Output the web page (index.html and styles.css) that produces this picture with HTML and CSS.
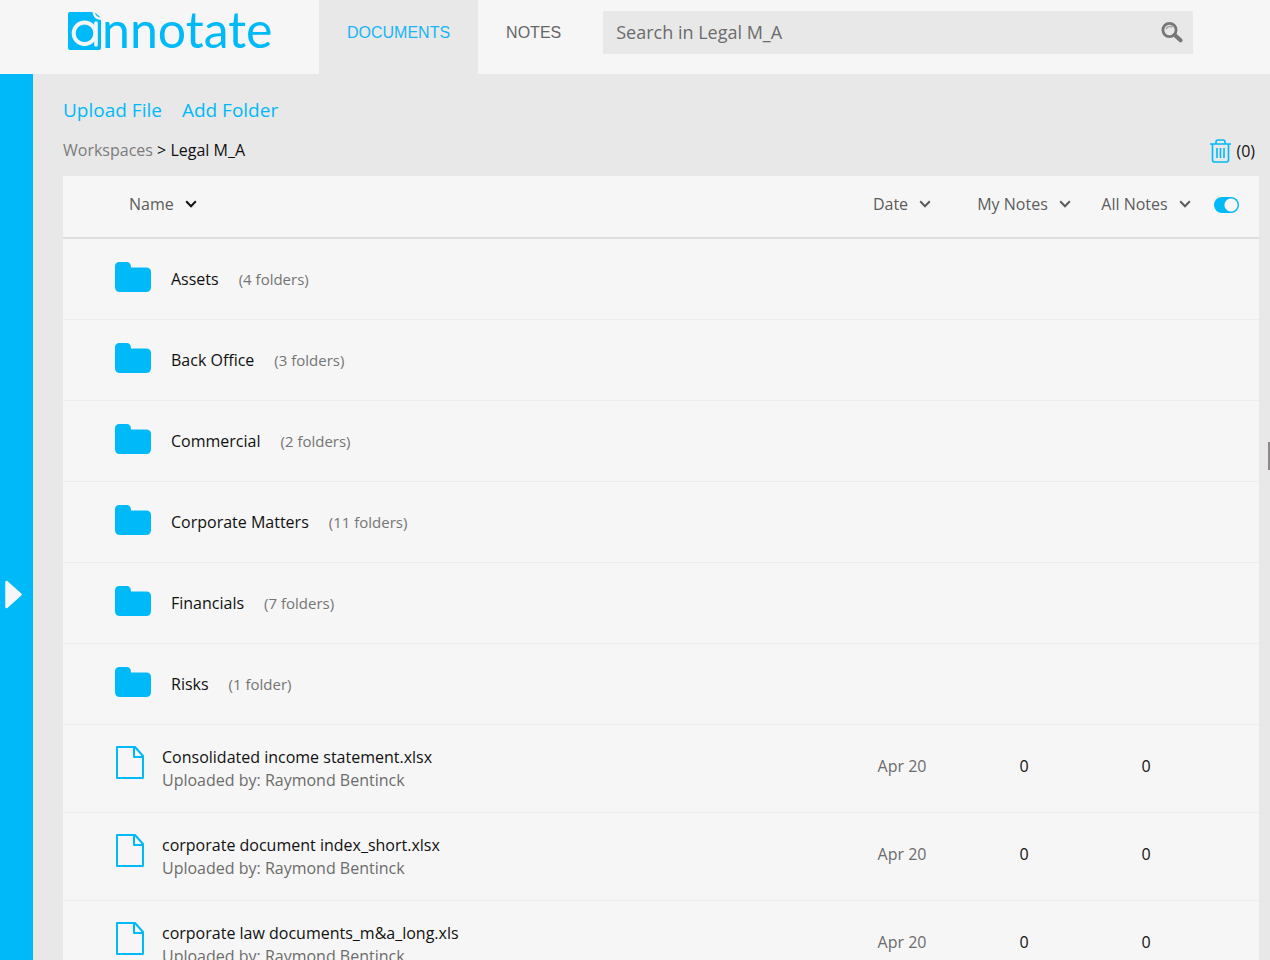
FILE: index.html
```html
<!DOCTYPE html>
<html lang="en">
<head>
<meta charset="utf-8">
<meta name="viewport" content="width=device-width, initial-scale=1">
<title>Annotate – Legal M_A</title>
<link rel="stylesheet" href="styles.css">
</head>
<body>
<svg class="sprite" aria-hidden="true">
  <symbol id="folder" viewBox="0 0 36 30"><path d="M4.500 0H11.500Q16 0 16 5.500H31Q36 5.500 36 10V25Q36 30 31 30H5Q0 30 0 25V4.500Q0 0 4.500 0Z" fill="currentColor"/></symbol>
  <symbol id="file" viewBox="0 0 28 33"><path d="M1 1H19L27 10V32H1ZM18 1V11H27" fill="none" stroke="currentColor" stroke-width="2" stroke-linejoin="round"/></symbol>
  <symbol id="chevron" viewBox="0 0 12 8"><path d="M1.200 1.300L6 6.200L10.800 1.300" fill="none" stroke="currentColor" stroke-width="2"/></symbol>
</svg>
<div class="app">
  <header class="topbar">
    <a class="logo" href="#" aria-label="annotate">
      <svg class="logo-mark" viewBox="0 0 34 38" aria-hidden="true">
        <path d="M2 0H24.500Q25 7 33 8V36Q33 38 31 38H2Q0 38 0 36V2Q0 0 2 0Z" fill="#00b9f8"/>
        <path d="M27 .5L32.500 5.500Q28 5 27 .5Z" fill="#00b9f8"/>
        <circle cx="16.500" cy="21.200" r="10.800" fill="none" stroke="#f6f6f6" stroke-width="4"/>
        <path d="M28 11V33" stroke="#f6f6f6" stroke-width="3.600" stroke-linecap="round"/>
      </svg>
      <span class="logo-text">nnotate</span>
    </a>
    <nav class="tabs">
      <a class="tab tab-active" href="#">DOCUMENTS</a>
      <a class="tab" href="#">NOTES</a>
    </nav>
    <form class="search">
      <input class="search-input" type="search" placeholder="Search in Legal M_A" aria-label="Search in Legal M_A">
      <button class="search-button" type="button" aria-label="Search">
        <svg viewBox="0 0 22 21" width="22" height="21" aria-hidden="true"><circle cx="8.500" cy="8" r="6.600" fill="none" stroke="currentColor" stroke-width="2.800"/><path d="M5 7Q7 3.500 11.500 5" fill="none" stroke="currentColor" stroke-width="1.600" opacity=".6"/><path d="M13.500 12.800L19.500 18.300" stroke="currentColor" stroke-width="4" stroke-linecap="round"/></svg>
      </button>
    </form>
  </header>
  <div class="body">
    <aside class="rail">
      <button class="rail-toggle" type="button" aria-label="Open panel">
        <svg viewBox="0 0 17 29" width="17" height="29" aria-hidden="true"><path d="M1.500 2L15.500 14.500L1.500 27Z" fill="currentColor" stroke="currentColor" stroke-width="2.500" stroke-linejoin="round"/></svg>
      </button>
    </aside>
    <main class="content">
      <div class="actions">
        <button class="action" type="button">Upload File</button>
        <button class="action" type="button">Add Folder</button>
      </div>
      <div class="path-row">
        <nav class="path" aria-label="Breadcrumb"><a class="path-link" href="#">Workspaces</a> &gt; <span>Legal M_A</span></nav>
        <button class="trash" type="button" aria-label="Trash (0)">
          <svg class="trash-icon" viewBox="0 0 22 24" width="22" height="24" aria-hidden="true"><path d="M0 5H21M6 5V3Q6 1 8 1H13Q15 1 15 3V5M2.500 5V21Q2.500 23 4.500 23H16.500Q18.500 23 18.500 21V5M7 9V19M10.500 9V19M14 9V19" fill="none" stroke="currentColor" stroke-width="1.600"/></svg>
          <span>(0)</span>
        </button>
      </div>
      <table class="files">
        <thead>
          <tr>
            <th class="name-head"><button class="sort sort-active" type="button">Name <svg class="chevron"><use href="#chevron"/></svg></button></th>
            <th class="col-value"><button class="sort" type="button">Date <svg class="chevron"><use href="#chevron"/></svg></button></th>
            <th class="col-value"><button class="sort" type="button">My Notes <svg class="chevron"><use href="#chevron"/></svg></button></th>
            <th class="col-value"><button class="sort" type="button">All Notes <svg class="chevron"><use href="#chevron"/></svg></button></th>
            <th class="col-switch"><input class="switch" type="checkbox" checked aria-label="Show notes columns"></th>
          </tr>
        </thead>
        <tbody>
          <tr class="folder-row"><td colspan="5"><div class="folder"><svg class="folder-icon"><use href="#folder"/></svg><span class="folder-name">Assets</span><span class="folder-count">(4 folders)</span></div></td></tr>
          <tr class="folder-row"><td colspan="5"><div class="folder"><svg class="folder-icon"><use href="#folder"/></svg><span class="folder-name">Back Office</span><span class="folder-count">(3 folders)</span></div></td></tr>
          <tr class="folder-row"><td colspan="5"><div class="folder"><svg class="folder-icon"><use href="#folder"/></svg><span class="folder-name">Commercial</span><span class="folder-count">(2 folders)</span></div></td></tr>
          <tr class="folder-row"><td colspan="5"><div class="folder"><svg class="folder-icon"><use href="#folder"/></svg><span class="folder-name">Corporate Matters</span><span class="folder-count">(11 folders)</span></div></td></tr>
          <tr class="folder-row"><td colspan="5"><div class="folder"><svg class="folder-icon"><use href="#folder"/></svg><span class="folder-name">Financials</span><span class="folder-count">(7 folders)</span></div></td></tr>
          <tr class="folder-row"><td colspan="5"><div class="folder"><svg class="folder-icon"><use href="#folder"/></svg><span class="folder-name">Risks</span><span class="folder-count">(1 folder)</span></div></td></tr>
          <tr class="file-row"><td><div class="file"><svg class="file-icon"><use href="#file"/></svg><div><div class="file-name">Consolidated income statement.xlsx</div><div class="file-owner">Uploaded by: Raymond Bentinck</div></div></div></td><td class="value date">Apr 20</td><td class="value">0</td><td class="value">0</td><td></td></tr>
          <tr class="file-row"><td><div class="file"><svg class="file-icon"><use href="#file"/></svg><div><div class="file-name">corporate document index_short.xlsx</div><div class="file-owner">Uploaded by: Raymond Bentinck</div></div></div></td><td class="value date">Apr 20</td><td class="value">0</td><td class="value">0</td><td></td></tr>
          <tr class="file-row"><td><div class="file"><svg class="file-icon"><use href="#file"/></svg><div><div class="file-name">corporate law documents_m&amp;a_long.xls</div><div class="file-owner">Uploaded by: Raymond Bentinck</div></div></div></td><td class="value date">Apr 20</td><td class="value">0</td><td class="value">0</td><td></td></tr>
        </tbody>
      </table>
    </main>
  </div>
  <div class="edge-handle"></div>
</div>
</body>
</html>
```
FILE: styles.css
```css
* { box-sizing: border-box; }
body { margin: 0; font: 16px/24px "Open Sans", sans-serif; color: #111; background: #e8e8e8; }
button { font: inherit; color: inherit; background: none; border: 0; padding: 0; cursor: pointer; }
a { text-decoration: none; color: inherit; }
svg { display: block; flex: none; }
.sprite { position: absolute; width: 0; height: 0; }

.app { position: relative; height: 100vh; display: flex; flex-direction: column; overflow: hidden; }
.topbar { display: flex; flex: none; height: 74px; background: #f6f6f6; }
.logo { display: flex; width: 319px; padding: 12px 0 0 68px; color: #00b9f8; }
.logo-mark { width: 34px; height: 38px; }
.logo-text { font-family: Lato, sans-serif; font-size: 50px; line-height: 34px; }
.tabs { display: flex; font: 16px/20px "Liberation Sans", Arial, sans-serif; color: #666; }
.tab { padding: 23px 28px 0; }
.tab-active { background: #e8e8e8; color: #19b5f5; }
.search { display: flex; flex: 1; height: 43px; margin: 11px 77px 0 14px; background: #e8e8e8; }
.search-input { flex: 1; min-width: 0; border: 0; background: none; padding: 0 13px 2px; font: 18px/24px "Open Sans", sans-serif; color: #666; }
.search-input::placeholder { color: #6c6c6c; opacity: 1; }
.search-button { padding: 0 10px; color: #777; }

.body { display: flex; flex: 1; min-height: 0; }
.rail { flex: none; width: 33px; padding: 506px 0 0 5px; background: #00b9f8; }
.rail-toggle { display: block; color: #f6f6f6; }
.content { flex: 1; min-width: 0; padding: 22px 11px 0 30px; overflow: auto; scrollbar-width: none; }
.actions { display: flex; gap: 20px; font-size: 19px; line-height: 28px; color: #00b9f8; }
.path-row { display: flex; justify-content: space-between; align-items: center; padding: 13px 4px 12px 0; }
.path { font-size: 16px; line-height: 27px; color: #111; }
.path-link { color: #7c7c7c; }
.trash { display: flex; align-items: center; gap: 4px; line-height: 24px; }
.trash-icon { color: #00b9f8; }

.files { width: 100%; table-layout: fixed; border-spacing: 0; background: #f6f6f6; }
th, td { padding: 0; font-weight: 400; text-align: center; border-bottom: 1px solid #ececec; }
th { height: 63px; border-bottom: 2px solid #dedede; padding-bottom: 6px; }
.name-head { text-align: left; padding-left: 66px; }
.col-value { width: 122px; }
.col-switch { width: 52px; text-align: left; padding-left: 7px; }
.sort { display: inline-flex; align-items: center; gap: 11px; color: #5c5c5c; }
.chevron { width: 12px; height: 8px; }
.sort-active .chevron { color: #111; }
.switch { appearance: none; display: block; width: 25px; height: 16px; margin: 2px 0 0; border-radius: 8px; background: radial-gradient(circle at 17px 8px, #f6f6f6 6px, #00b9f8 7px); }
.folder-row td { height: 81px; }
.folder { display: flex; align-items: center; padding-left: 52px; }
.folder-icon { width: 36px; height: 30px; margin-bottom: 4px; color: #00b9f8; }
.folder-name { margin: 0 20px; }
.folder-count { font-size: 15px; color: #757575; }
.file-row td { height: 88px; }
.file { display: flex; align-items: center; gap: 18px; padding-left: 53px; text-align: left; line-height: 23px; }
.file-icon { width: 28px; height: 33px; margin-bottom: 12px; color: #00b9f8; }
.file-row .value { padding-bottom: 6px; }
.file-owner, .date { color: #6c6c6c; }
.edge-handle { position: absolute; right: 0; top: 442px; width: 2px; height: 28px; background: #8c8788; }
```
